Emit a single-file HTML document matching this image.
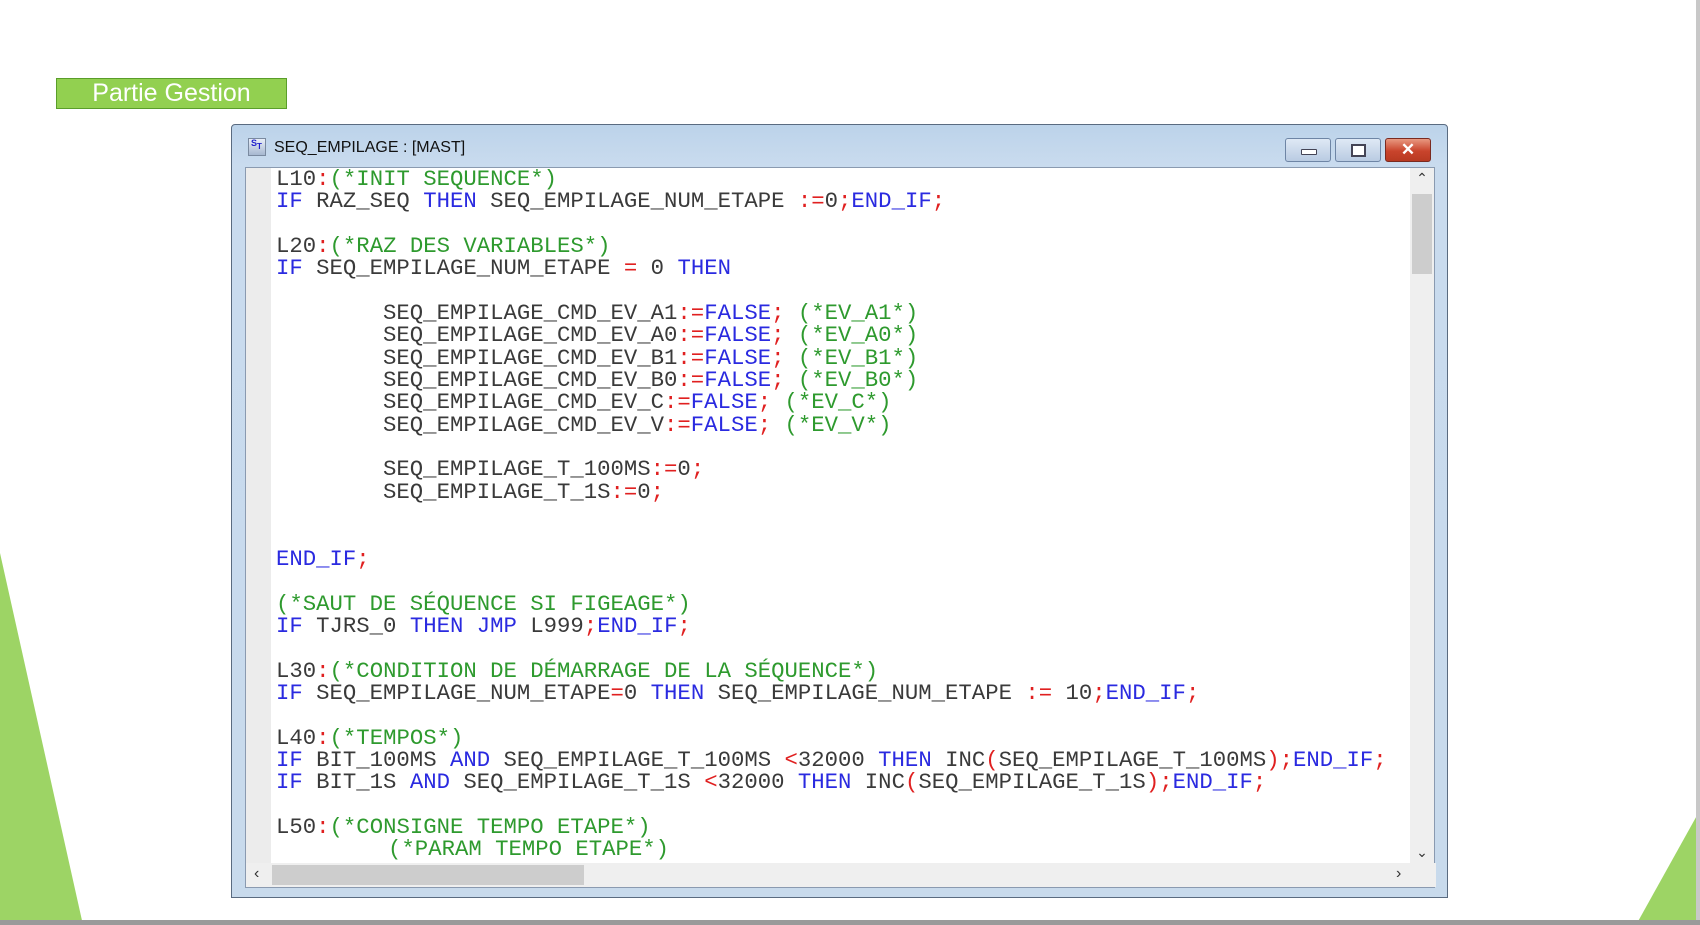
<!DOCTYPE html>
<html><head><meta charset="utf-8"><style>
body{margin:0;width:1700px;height:925px;background:#fff;position:relative;overflow:hidden;font-family:"Liberation Sans",sans-serif}
.lbl{position:absolute;left:56px;top:78px;width:229px;height:29px;background:#92d050;border:1px solid #5a9e2a;color:#fff;font-size:25px;line-height:29px;text-align:center}
.win{position:absolute;left:231px;top:124px;width:1217px;height:774px;border:1px solid #5a6b80;border-radius:4px 4px 0 0;background:linear-gradient(#bcd3ea,#c9dbee 40px,#c8daec);box-sizing:border-box}
.title{position:absolute;left:42px;top:14px;font-size:16px;color:#111}
.ico{position:absolute;left:16px;top:13px;width:18px;height:18px;background:linear-gradient(#e8eef8,#a7b8d0);border:1px solid #7a8aa0;font-size:9px;color:#22c;font-weight:bold;line-height:9px;box-sizing:border-box;padding-left:2px}
.btn{position:absolute;top:13px;height:22px;border:1px solid #6e85a5;border-radius:3px;background:linear-gradient(#dfe9f5,#b9cbe2)}
.client{position:absolute;left:13px;top:42px;width:1190px;height:721px;background:#fff;border:1px solid #8a9ab0;box-sizing:border-box}
.gut{position:absolute;left:0;top:0;width:25px;height:697px;background:#ececec}
pre{position:absolute;left:30px;top:0;margin:0;font-family:"Liberation Mono",monospace;font-size:22.3px;line-height:22.35px;color:#3a3a3a;letter-spacing:0}
.k{color:#2a2ae0}.c{color:#2e9a2e}.o{color:#e02020}
.vs{position:absolute;right:0;top:0;width:24px;height:697px;background:#efefef}
.hs{position:absolute;left:0;bottom:0;width:1190px;height:24px;background:#efefef}
</style></head><body>
<svg style="position:absolute;left:0;top:0" width="1700" height="925">
<polygon points="0,553 83,925 0,925" fill="#9dd465"/>
<polygon points="1700,810 1700,925 1636,925" fill="#9dd465"/>
<rect x="1696" y="0" width="4" height="925" fill="#c8c8c8"/>
<rect x="0" y="920" width="1700" height="5" fill="#9a9a9a"/>
</svg>
<div class="lbl">Partie Gestion</div>
<div class="win">
<div class="ico">S<sub style="font-size:8px">T</sub></div>
<div class="title">SEQ_EMPILAGE : [MAST]</div>
<div class="btn" style="left:1053px;width:44px"><div style="position:absolute;left:15px;top:10px;width:14px;height:4px;border:1px solid #445;background:#fff;border-radius:1px"></div></div>
<div class="btn" style="left:1103px;width:44px"><div style="position:absolute;left:15px;top:5px;width:11px;height:9px;border:2px solid #445;background:#fff"></div></div>
<div class="btn" style="left:1153px;width:44px;border-color:#7a2a20;background:linear-gradient(#e89880,#c9442c 55%,#b83a22);color:#fff;font-weight:bold;font-size:17px;text-align:center;line-height:22px">✕</div>
<div class="client">
<div class="gut"></div>
<pre>L10<span class="o">:</span><span class="c">(*INIT SEQUENCE*)</span>
<span class="k">IF</span> RAZ_SEQ <span class="k">THEN</span> SEQ_EMPILAGE_NUM_ETAPE <span class="o">:=</span>0<span class="o">;</span><span class="k">END_IF</span><span class="o">;</span>

L20<span class="o">:</span><span class="c">(*RAZ DES VARIABLES*)</span>
<span class="k">IF</span> SEQ_EMPILAGE_NUM_ETAPE <span class="o">=</span> 0 <span class="k">THEN</span>

        SEQ_EMPILAGE_CMD_EV_A1<span class="o">:=</span><span class="k">FALSE</span><span class="o">;</span> <span class="c">(*EV_A1*)</span>
        SEQ_EMPILAGE_CMD_EV_A0<span class="o">:=</span><span class="k">FALSE</span><span class="o">;</span> <span class="c">(*EV_A0*)</span>
        SEQ_EMPILAGE_CMD_EV_B1<span class="o">:=</span><span class="k">FALSE</span><span class="o">;</span> <span class="c">(*EV_B1*)</span>
        SEQ_EMPILAGE_CMD_EV_B0<span class="o">:=</span><span class="k">FALSE</span><span class="o">;</span> <span class="c">(*EV_B0*)</span>
        SEQ_EMPILAGE_CMD_EV_C<span class="o">:=</span><span class="k">FALSE</span><span class="o">;</span> <span class="c">(*EV_C*)</span>
        SEQ_EMPILAGE_CMD_EV_V<span class="o">:=</span><span class="k">FALSE</span><span class="o">;</span> <span class="c">(*EV_V*)</span>

        SEQ_EMPILAGE_T_100MS<span class="o">:=</span>0<span class="o">;</span>
        SEQ_EMPILAGE_T_1S<span class="o">:=</span>0<span class="o">;</span>


<span class="k">END_IF</span><span class="o">;</span>

<span class="c">(*SAUT DE SÉQUENCE SI FIGEAGE*)</span>
<span class="k">IF</span> TJRS_0 <span class="k">THEN</span> <span class="k">JMP</span> L999<span class="o">;</span><span class="k">END_IF</span><span class="o">;</span>

L30<span class="o">:</span><span class="c">(*CONDITION DE DÉMARRAGE DE LA SÉQUENCE*)</span>
<span class="k">IF</span> SEQ_EMPILAGE_NUM_ETAPE<span class="o">=</span>0 <span class="k">THEN</span> SEQ_EMPILAGE_NUM_ETAPE <span class="o">:=</span> 10<span class="o">;</span><span class="k">END_IF</span><span class="o">;</span>

L40<span class="o">:</span><span class="c">(*TEMPOS*)</span>
<span class="k">IF</span> BIT_100MS <span class="k">AND</span> SEQ_EMPILAGE_T_100MS <span class="o">&lt;</span>32000 <span class="k">THEN</span> INC<span class="o">(</span>SEQ_EMPILAGE_T_100MS<span class="o">);</span><span class="k">END_IF</span><span class="o">;</span>
<span class="k">IF</span> BIT_1S <span class="k">AND</span> SEQ_EMPILAGE_T_1S <span class="o">&lt;</span>32000 <span class="k">THEN</span> INC<span class="o">(</span>SEQ_EMPILAGE_T_1S<span class="o">);</span><span class="k">END_IF</span><span class="o">;</span>

L50<span class="o">:</span><span class="c">(*CONSIGNE TEMPO ETAPE*)</span>
        <span class="c" style="margin-left:5px">(*PARAM TEMPO ETAPE*)</span></pre>
<div class="vs"><div style="position:absolute;top:2px;width:24px;text-align:center;font-size:14px;color:#333">⌃</div><div style="position:absolute;left:2px;top:26px;width:20px;height:80px;background:#cdcdcd"></div><div style="position:absolute;bottom:4px;width:24px;text-align:center;font-size:14px;color:#333">⌄</div></div>
<div class="hs"><div style="position:absolute;left:8px;top:2px;font-size:16px;color:#333">‹</div><div style="position:absolute;left:26px;top:2px;width:312px;height:20px;background:#cdcdcd"></div><div style="position:absolute;left:1150px;top:2px;font-size:16px;color:#333">›</div></div>
</div>
</div>
</body></html>
